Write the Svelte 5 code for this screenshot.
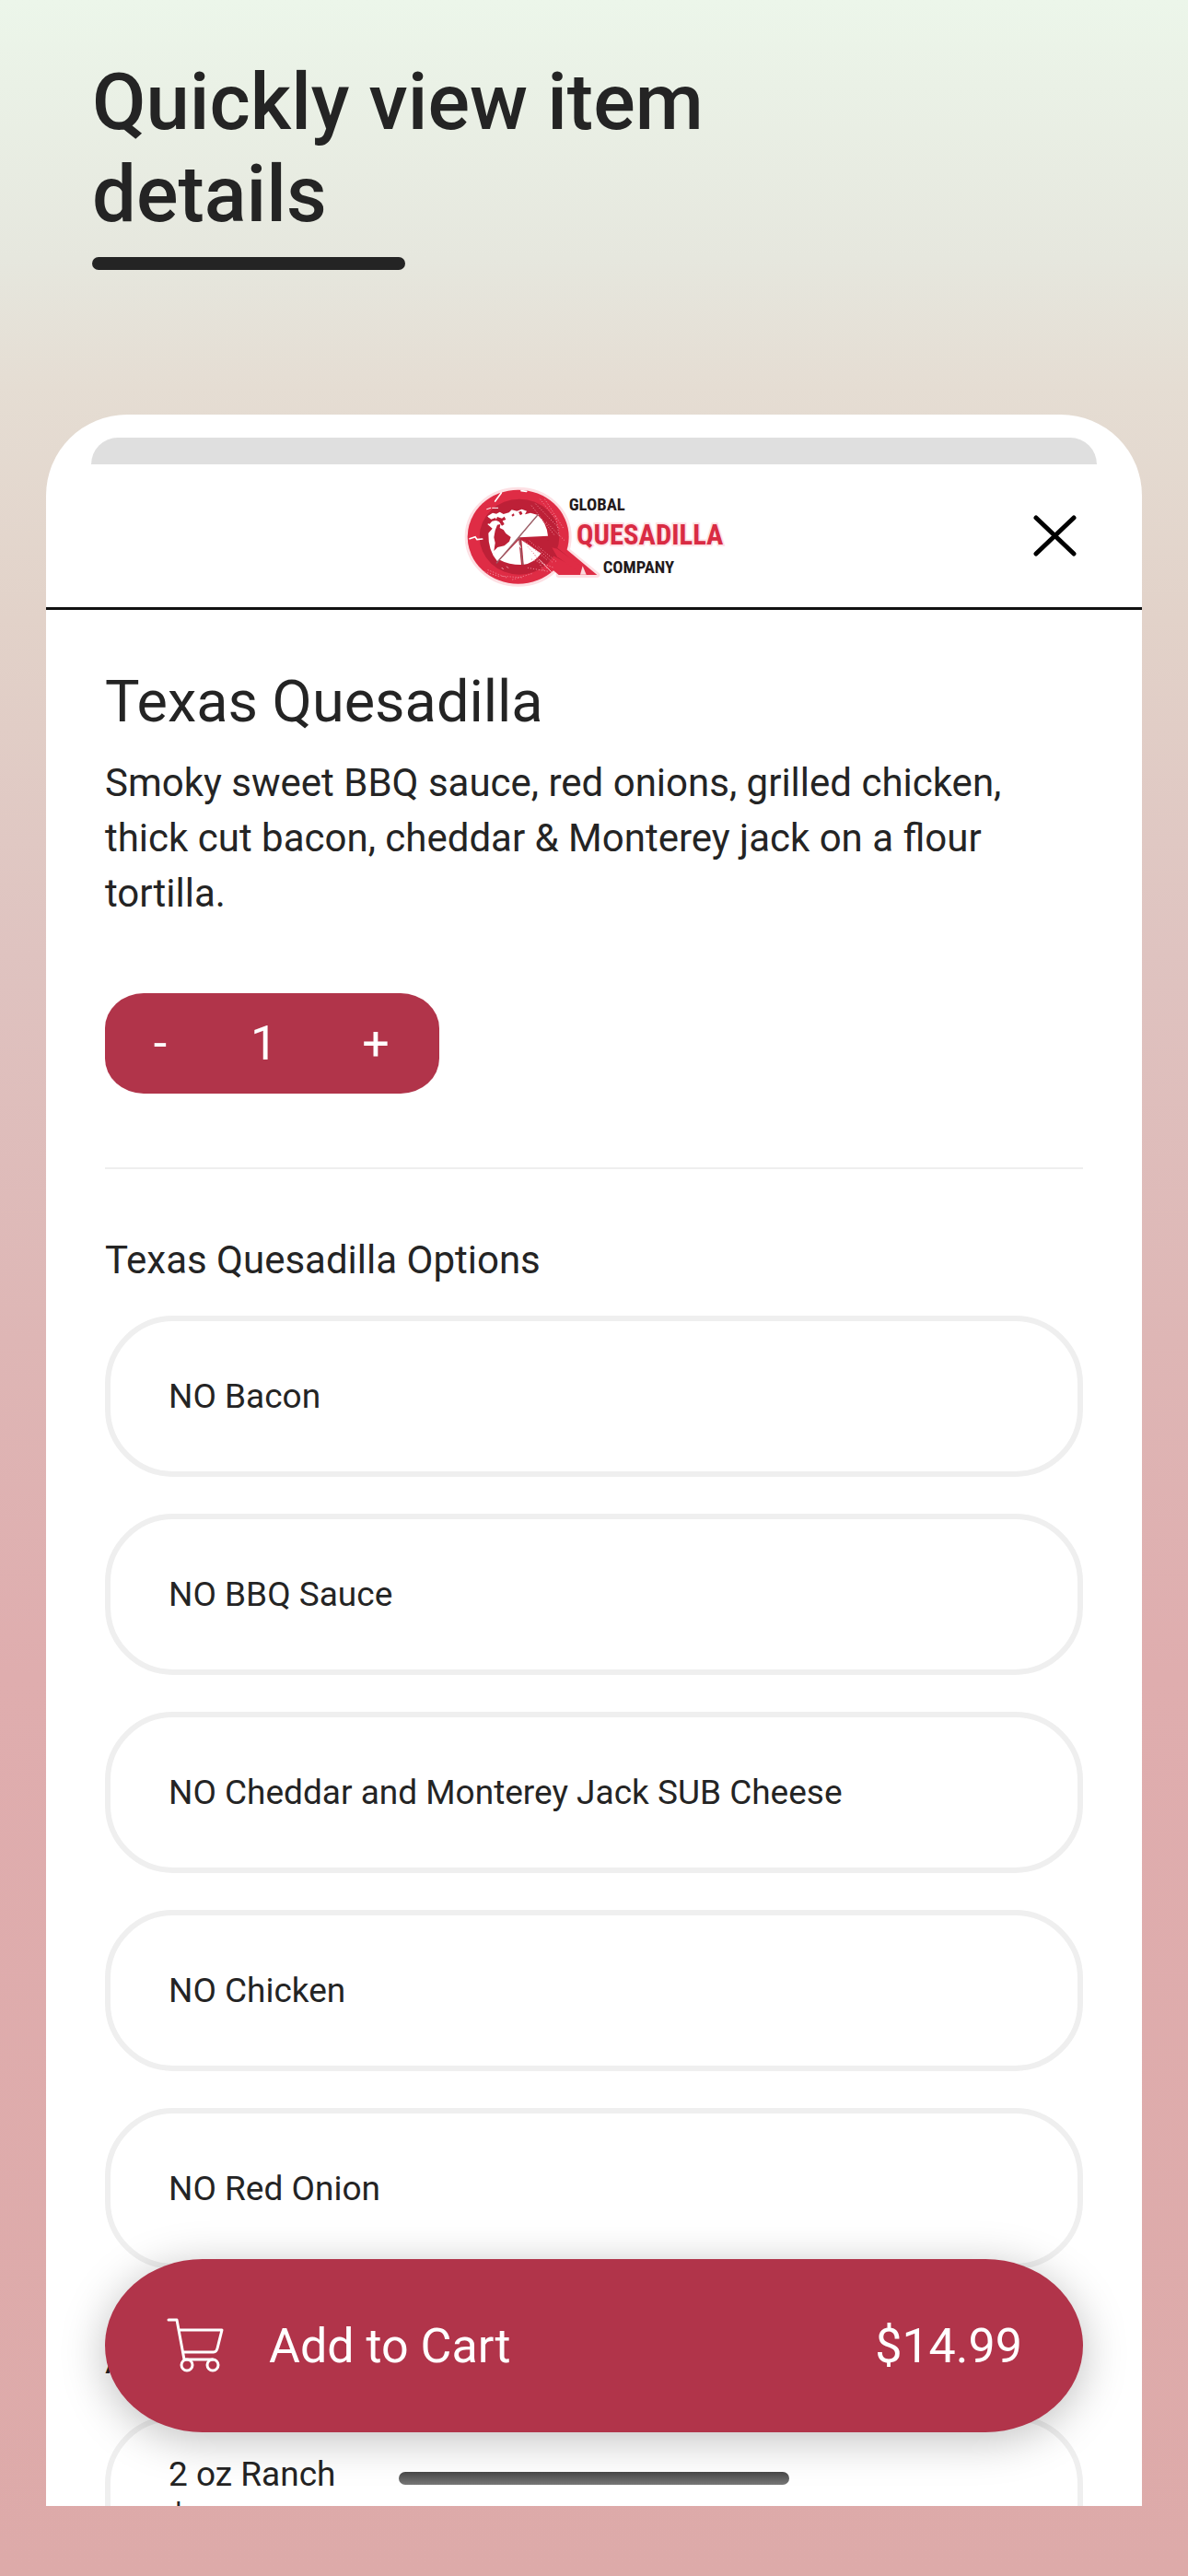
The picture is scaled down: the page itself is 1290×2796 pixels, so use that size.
<script lang="ts">
	const options = [
		'NO Bacon',
		'NO BBQ Sauce',
		'NO Cheddar and Monterey Jack SUB Cheese',
		'NO Chicken',
		'NO Red Onion'
	];
	const unitPrice = 14.99;

	let quantity = $state(1);
	let selected: string[] = $state([]);

	const total = $derived((unitPrice * quantity).toFixed(2));

	function toggle(name: string) {
		selected = selected.includes(name) ? selected.filter((n) => n !== name) : [...selected, name];
	}
</script>

<main class="page">
	<h1 class="headline">Quickly view item details</h1>
	<div class="underline"></div>

	<div class="phone">
		<div class="behind"></div>

		<header class="topbar">
			<svg class="logo" viewBox="30 35 870 360" role="img" aria-label="Global Quesadilla Company">
				<!-- pale halo -->
				<g stroke="#fde0e4" stroke-width="18" stroke-linejoin="round" fill="#fde0e4">
					<ellipse cx="218" cy="217" rx="165" ry="153" />
					<path d="M366 252 L475 341 H350 Z" />
				</g>
				<!-- pan and handle -->
				<ellipse cx="218" cy="217" rx="165" ry="153" fill="#df2c45" />
				<path d="M360 245 L475 341 H350 L290 290 Z" fill="#df2c45" />
				<ellipse cx="222" cy="217" rx="130" ry="123" fill="#bd2037" />
				<path d="M300 215 L405 302 L372 300 L300 262 Z" fill="#bd2037" />
				<path d="M328 252 L345 256 L438 322 L424 338 L345 282 Z" fill="#df2c45" />
				<path d="M428 312 L440 340 H420 Z" fill="#fbd9dd" />
				<!-- globe half -->
				<path
					d="M118 150 L135 139 L147 142 L158 136 L170 143 L188 138 L197 129 L214 133 L230 127 L246 133 L240 144 L258 139 L282 146 L222 219 L150 297 Q120 262 121 205 L134 190 L118 176 L130 166 Z"
					fill="#fff"
				/>
				<path
					d="M108 160 l14 -6 8 6 14 -5 3 8 -14 3 -8 9 -12 -4 Z M150 152 l15 5 8 -6 5 10 -11 4 6 11 -8 5 -9 -13 -11 -5 Z M219 136 l9 -3 4 9 -7 5 Z M196 146 l7 -5 3 6 -6 4 Z"
					fill="#bd2037"
				/>
				<!-- south america -->
				<path
					d="M143 196 l7 -18 10 -2 -2 12 12 6 8 12 16 12 -5 14 -16 14 -22 5 -12 12 4 -26 -4 -18 Z"
					fill="#bd2037"
				/>
				<!-- slices -->
				<path d="M222 219 L282 147 Q312 174 315 214 Z" fill="#fff" />
				<path d="M229 228 L293 271 Q268 303 236 307 Z" fill="#fff" />
				<path d="M220 227 L228 308 Q187 308 158 292 Z" fill="#fff" />
				<path d="M284 143 L147 303 M222 220 L233 308" stroke="#9a6068" stroke-width="4" fill="none" />
				<!-- scratches -->
				<g stroke="#fff" stroke-linecap="round" fill="none">
					<path d="M163 74 L143 101 M60 223 L78 217 L84 226 L101 224 M228 67 L245 69" stroke-width="5" />
					<path d="M116 127 l12 -4 m6 0 h18 M222 244 l4 8" stroke-width="3" />
					<g stroke="#f08a99" stroke-width="3" stroke-dasharray="1 8">
						<path d="M290 95 L340 158 M275 110 L352 190 M262 116 L335 210 M305 95 L366 190 M310 170 L372 232 M340 150 L352 215" />
						<path d="M110 332 L155 345 M120 325 L180 350 M165 345 L235 350 M200 356 L262 337 M250 318 L318 330 M262 290 L335 318" />
						<path d="M240 232 L312 292 M255 230 L330 300 M250 250 L310 318 M285 250 L345 300 M268 270 L300 325" />
					</g>
					<path d="M288 292 L325 330 M165 318 l4 4 m12 -8 l4 4" stroke="#f7b3bc" stroke-width="3" />
				</g>
				<g class="wordmark">
					<text x="383" y="132" font-size="56" fill="#231a1c">GLOBAL</text>
					<text x="408" y="242" font-size="92" fill="#d92b43" class="glow">QUESADILLA</text>
					<text x="494" y="336" font-size="56" fill="#231a1c">COMPANY</text>
				</g>
			</svg>
			<button class="close" type="button" aria-label="Close">
				<svg viewBox="0 0 48 48" aria-hidden="true">
					<path d="M3 4 L44 43 M44 4 L3 43" />
				</svg>
			</button>
		</header>

		<section class="item">
			<h2>Texas Quesadilla</h2>
			<p>
				Smoky sweet BBQ sauce, red onions, grilled chicken, thick cut bacon, cheddar &amp; Monterey jack
				on a flour tortilla.
			</p>
			<div class="stepper">
				<button type="button" aria-label="Decrease quantity" onclick={() => (quantity = Math.max(1, quantity - 1))}>-</button>
				<output>{quantity}</output>
				<button type="button" aria-label="Increase quantity" onclick={() => quantity++}>+</button>
			</div>
		</section>

		<section class="group">
			<h3>Texas Quesadilla Options</h3>
			<div class="options">
				{#each options as name (name)}
					<button type="button" class="option" aria-pressed={selected.includes(name)} onclick={() => toggle(name)}>
						{name}
					</button>
				{/each}
			</div>
		</section>

		<section class="group">
			<h3>Add</h3>
			<div class="options">
				<button
					type="button"
					class="option"
					aria-pressed={selected.includes('2 oz Ranch')}
					onclick={() => toggle('2 oz Ranch')}
				>
					2 oz Ranch<br />$
				</button>
			</div>
		</section>

		<button type="button" class="add">
			<svg viewBox="0 0 64 60" aria-hidden="true">
				<path d="M3 2 h9 l8 43 M14 13 h47 l-5 20 q-1 4 -4 4 h-33" />
				<path d="M21 45 H51" />
				<circle cx="23" cy="51" r="6" />
				<circle cx="51" cy="51" r="6" />
			</svg>
			<span>Add to Cart</span>
			<span class="price">${total}</span>
		</button>
		<div class="home"></div>
	</div>
</main>

<style>
	:global(body) {
		background: #ddaaa9;
	}
	.page {
		box-sizing: border-box;
		display: flex;
		flex-direction: column;
		height: 100vh;
		padding: 61px 50px 76px;
		background: linear-gradient(
			#ecf6ea 0%,
			#e6e7de 10%,
			#e5ddd3 15%,
			#e2d2c9 24%,
			#dfc3c0 37%,
			#deb6b5 52%,
			#dfadae 65%,
			#ddaaa9 100%
		);
		font-family: Roboto, 'Liberation Sans', sans-serif;
		color: #242424;
	}
	h1,
	h2,
	h3,
	p {
		margin: 0;
		font-weight: 400;
	}
	button {
		font: inherit;
		color: inherit;
		border: 0;
		background: none;
		padding: 0;
		cursor: pointer;
	}
	.headline {
		max-width: 800px;
		margin-left: 50px;
		font-size: 85px;
		line-height: 100px;
		font-weight: 500;
	}
	.underline {
		flex: none;
		width: 340px;
		height: 14px;
		margin: 18px 0 157px 50px;
		border-radius: 7px;
		background: #242424;
	}
	.phone {
		position: relative;
		flex: 1;
		min-height: 0;
		overflow: hidden;
		background: #fff;
		border-radius: 88px 88px 0 0;
	}
	.behind {
		height: 29px;
		margin: 25px 49px 0;
		border-radius: 29px 29px 0 0;
		background: #dfdfdf;
	}
	.topbar {
		display: grid;
		grid-template-columns: 1fr auto 1fr;
		align-items: center;
		height: 155px;
		padding: 0 70px;
		border-bottom: 3px solid #111;
	}
	.logo {
		grid-column: 2;
		width: 290px;
		height: 120px;
	}
	.wordmark {
		font-family: 'Roboto Condensed', 'Liberation Sans Narrow', Roboto, sans-serif;
		font-weight: 700;
	}
	.glow {
		stroke: #fde0e4;
		stroke-width: 10px;
		paint-order: stroke;
	}
	.close {
		justify-self: end;
		width: 48px;
		height: 48px;
	}
	.close svg {
		display: block;
		fill: none;
		stroke: #000;
		stroke-width: 5;
		stroke-linecap: round;
	}
	.item {
		margin: 0 64px;
		padding: 64px 0 80px;
		border-bottom: 2px solid #eee;
	}
	h2 {
		font-size: 63px;
		line-height: 72px;
	}
	p {
		margin-top: 22px;
		font-size: 42px;
		line-height: 60px;
	}
	.stepper {
		display: grid;
		grid-template-columns: 120px 1fr 138px;
		align-items: center;
		width: 363px;
		height: 109px;
		margin-top: 78px;
		border-radius: 42px / 38px;
		background: #b1344a;
		color: #fff;
		font-size: 52px;
		text-align: center;
	}
	.stepper button {
		height: 100%;
	}
	.group {
		padding: 69px 64px 0;
	}
	h3 {
		font-size: 42px;
		line-height: 60px;
	}
	.options {
		display: grid;
		gap: 40px;
		margin-top: 30px;
	}
	.option {
		height: 175px;
		padding: 0 63px;
		border: 6px solid #efefef;
		border-radius: 74px;
		font-size: 37px;
		line-height: 48px;
		text-align: left;
	}
	.add {
		position: absolute;
		left: 64px;
		right: 64px;
		bottom: 80px;
		display: flex;
		align-items: center;
		gap: 48px;
		height: 188px;
		padding: 0 66px;
		border-radius: 106px / 94px;
		background: #b1344a;
		box-shadow: 0 8px 48px rgba(0, 0, 0, 0.25);
		color: #fff;
		font-size: 52px;
	}
	.add svg {
		width: 64px;
		height: 60px;
		fill: none;
		stroke: #fff;
		stroke-width: 3;
		stroke-linejoin: round;
		stroke-linecap: round;
	}
	.price {
		margin-left: auto;
	}
	.home {
		position: absolute;
		left: 50%;
		bottom: 23px;
		width: 424px;
		height: 14px;
		transform: translateX(-50%);
		border-radius: 7px;
		background: linear-gradient(#464646, #777);
	}
</style>
